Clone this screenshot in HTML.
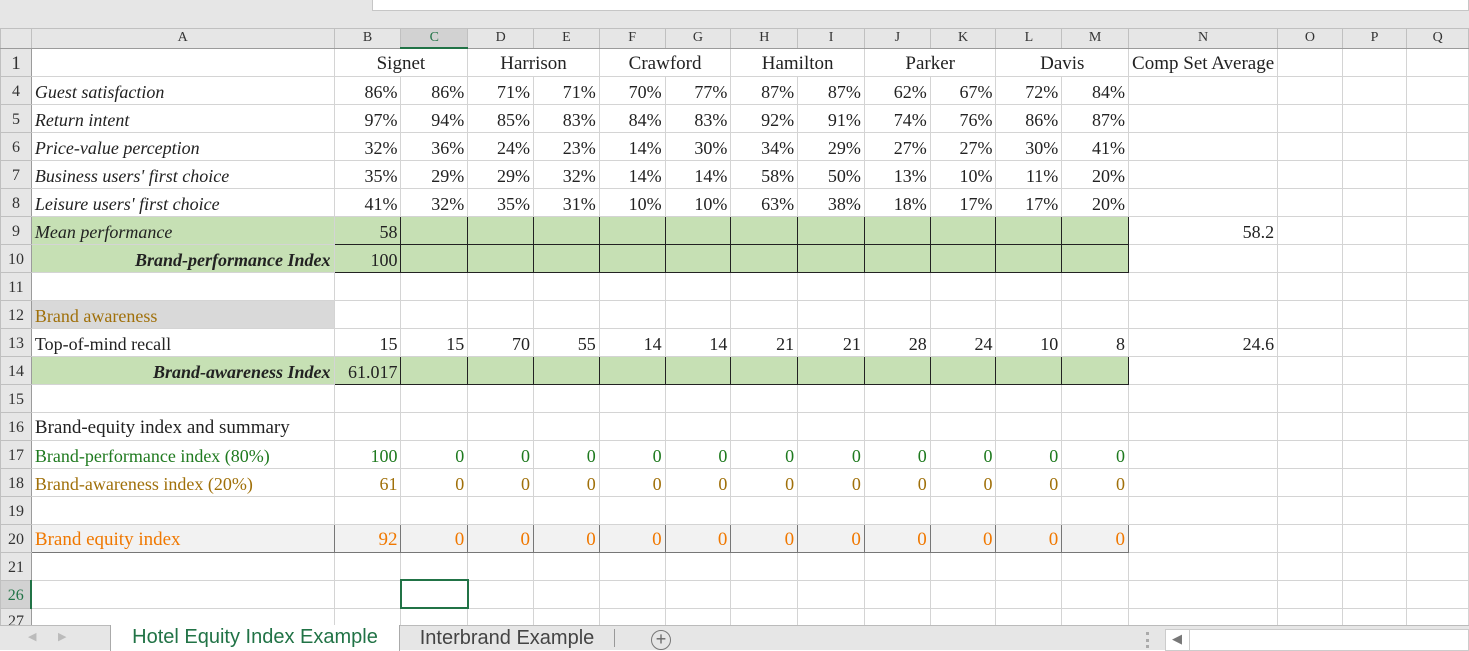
<!DOCTYPE html>
<html><head><meta charset="utf-8"><style>
*{margin:0;padding:0;box-sizing:border-box}
body{width:1469px;height:650px;overflow:hidden;background:#fff;font-family:"Liberation Serif",serif;position:relative}
.top{position:absolute;left:0;top:0;width:1469px;height:28px;background:#e6e6e6}
.top .box{position:absolute;left:372px;top:0;width:1097px;height:11px;background:#fff;border:1px solid #c6c6c6;border-top:none}
table{position:absolute;left:0;top:28px;border-collapse:collapse;table-layout:fixed}
td{border:1px solid #d4d4d4;height:28px;font-size:18px;color:#222;white-space:nowrap;overflow:hidden;padding:4px 3px 0 3px;text-align:right;line-height:22px;vertical-align:top}
tr.h td{height:19px;background:#e6e6e6;border-color:#c0c0c0;font-size:14px;text-align:center;line-height:18px;padding:0;color:#333;border-bottom:1px solid #9b9b9b}
td.rh{background:#e6e6e6;border-color:#c0c0c0;border-right:1px solid #9b9b9b;font-size:16px;text-align:center;padding:4px 0 0 0;color:#333}
td.l{text-align:left}
td.i{font-style:italic}
.g{background:#c6e0b4}
.gb{background:#c6e0b4;border:1px solid #222}
.bi{font-weight:bold;font-style:italic}
.grn{color:#1f7a1f}
.brn{color:#a0700a}
.org td{color:#f07800;background:#f2f2f2;border-top:1px solid #777;border-bottom:1px solid #777;font-size:19px}
.org td.v{border-right:1px solid #777}
.org td.rh{color:#333;background:#e6e6e6;border-top:1px solid #c0c0c0;border-bottom:1px solid #c0c0c0;font-size:16px}
.c{text-align:center}
tr.r1 td{font-size:19px}
.tabs{position:absolute;left:0;top:625px;width:1469px;height:25px;background:#e6e6e6;border-top:1px solid #bbb;font-family:"Liberation Sans",sans-serif}
.sel{position:absolute;left:110px;top:-1px;width:290px;height:26px;background:#fff;border-left:1px solid #aaa;border-right:1px solid #aaa;color:#217346;font-size:20px;text-align:center;line-height:24px}
.t2{position:absolute;left:402px;top:0;width:210px;color:#444;font-size:20px;text-align:center;line-height:24px}
</style></head><body>
<div class="top"><div class="box"></div></div>
<table>
<colgroup><col style="width:31px"><col style="width:303px"><col style="width:67px"><col style="width:67px"><col style="width:66px"><col style="width:66px"><col style="width:66px"><col style="width:66px"><col style="width:67px"><col style="width:67px"><col style="width:66px"><col style="width:66px"><col style="width:66px"><col style="width:67px"><col style="width:146px"><col style="width:65px"><col style="width:65px"><col style="width:62px"></colgroup>
<tr class="h"><td style="background:#e6e6e6"></td><td>A</td><td>B</td><td style="background:#d2d2d2;color:#217346;border-bottom:2px solid #217346">C</td><td>D</td><td>E</td><td>F</td><td>G</td><td>H</td><td>I</td><td>J</td><td>K</td><td>L</td><td>M</td><td>N</td><td>O</td><td>P</td><td>Q</td></tr>
<tr class="r1"><td class="rh">1</td><td></td><td colspan="2" class="c">Signet</td><td colspan="2" class="c">Harrison</td><td colspan="2" class="c">Crawford</td><td colspan="2" class="c">Hamilton</td><td colspan="2" class="c">Parker</td><td colspan="2" class="c">Davis</td><td class="l">Comp Set Average</td><td></td><td></td><td></td></tr>
<tr><td class="rh">4</td><td class="l i">Guest satisfaction</td><td>86%</td><td>86%</td><td>71%</td><td>71%</td><td>70%</td><td>77%</td><td>87%</td><td>87%</td><td>62%</td><td>67%</td><td>72%</td><td>84%</td><td></td><td></td><td></td><td></td></tr>
<tr><td class="rh">5</td><td class="l i">Return intent</td><td>97%</td><td>94%</td><td>85%</td><td>83%</td><td>84%</td><td>83%</td><td>92%</td><td>91%</td><td>74%</td><td>76%</td><td>86%</td><td>87%</td><td></td><td></td><td></td><td></td></tr>
<tr><td class="rh">6</td><td class="l i">Price-value perception</td><td>32%</td><td>36%</td><td>24%</td><td>23%</td><td>14%</td><td>30%</td><td>34%</td><td>29%</td><td>27%</td><td>27%</td><td>30%</td><td>41%</td><td></td><td></td><td></td><td></td></tr>
<tr><td class="rh">7</td><td class="l i">Business users' first choice</td><td>35%</td><td>29%</td><td>29%</td><td>32%</td><td>14%</td><td>14%</td><td>58%</td><td>50%</td><td>13%</td><td>10%</td><td>11%</td><td>20%</td><td></td><td></td><td></td><td></td></tr>
<tr><td class="rh">8</td><td class="l i">Leisure users' first choice</td><td>41%</td><td>32%</td><td>35%</td><td>31%</td><td>10%</td><td>10%</td><td>63%</td><td>38%</td><td>18%</td><td>17%</td><td>17%</td><td>20%</td><td></td><td></td><td></td><td></td></tr>
<tr><td class="rh">9</td><td class="l i g">Mean performance</td><td class="gb">58</td><td class="gb"></td><td class="gb"></td><td class="gb"></td><td class="gb"></td><td class="gb"></td><td class="gb"></td><td class="gb"></td><td class="gb"></td><td class="gb"></td><td class="gb"></td><td class="gb"></td><td>58.2</td><td></td><td></td><td></td></tr>
<tr><td class="rh">10</td><td class="g bi">Brand-performance Index</td><td class="gb">100</td><td class="gb"></td><td class="gb"></td><td class="gb"></td><td class="gb"></td><td class="gb"></td><td class="gb"></td><td class="gb"></td><td class="gb"></td><td class="gb"></td><td class="gb"></td><td class="gb"></td><td></td><td></td><td></td><td></td></tr>
<tr><td class="rh">11</td><td></td><td></td><td></td><td></td><td></td><td></td><td></td><td></td><td></td><td></td><td></td><td></td><td></td><td></td><td></td><td></td><td></td></tr>
<tr><td class="rh">12</td><td class="l brn" style="background:#d9d9d9">Brand awareness</td><td></td><td></td><td></td><td></td><td></td><td></td><td></td><td></td><td></td><td></td><td></td><td></td><td></td><td></td><td></td><td></td></tr>
<tr><td class="rh">13</td><td class="l">Top-of-mind recall</td><td>15</td><td>15</td><td>70</td><td>55</td><td>14</td><td>14</td><td>21</td><td>21</td><td>28</td><td>24</td><td>10</td><td>8</td><td>24.6</td><td></td><td></td><td></td></tr>
<tr><td class="rh">14</td><td class="g bi">Brand-awareness Index</td><td class="gb">61.017</td><td class="gb"></td><td class="gb"></td><td class="gb"></td><td class="gb"></td><td class="gb"></td><td class="gb"></td><td class="gb"></td><td class="gb"></td><td class="gb"></td><td class="gb"></td><td class="gb"></td><td></td><td></td><td></td><td></td></tr>
<tr><td class="rh">15</td><td></td><td></td><td></td><td></td><td></td><td></td><td></td><td></td><td></td><td></td><td></td><td></td><td></td><td></td><td></td><td></td><td></td></tr>
<tr><td class="rh">16</td><td class="l" style="font-size:19px">Brand-equity index and summary</td><td></td><td></td><td></td><td></td><td></td><td></td><td></td><td></td><td></td><td></td><td></td><td></td><td></td><td></td><td></td><td></td></tr>
<tr><td class="rh">17</td><td class="l grn">Brand-performance index (80%)</td><td class="grn">100</td><td class="grn">0</td><td class="grn">0</td><td class="grn">0</td><td class="grn">0</td><td class="grn">0</td><td class="grn">0</td><td class="grn">0</td><td class="grn">0</td><td class="grn">0</td><td class="grn">0</td><td class="grn">0</td><td></td><td></td><td></td><td></td></tr>
<tr><td class="rh">18</td><td class="l brn">Brand-awareness index (20%)</td><td class="brn">61</td><td class="brn">0</td><td class="brn">0</td><td class="brn">0</td><td class="brn">0</td><td class="brn">0</td><td class="brn">0</td><td class="brn">0</td><td class="brn">0</td><td class="brn">0</td><td class="brn">0</td><td class="brn">0</td><td></td><td></td><td></td><td></td></tr>
<tr><td class="rh">19</td><td></td><td></td><td></td><td></td><td></td><td></td><td></td><td></td><td></td><td></td><td></td><td></td><td></td><td></td><td></td><td></td><td></td></tr>
<tr class="org"><td class="rh">20</td><td class="l v">Brand equity index</td><td class="v">92</td><td class="v">0</td><td class="v">0</td><td class="v">0</td><td class="v">0</td><td class="v">0</td><td class="v">0</td><td class="v">0</td><td class="v">0</td><td class="v">0</td><td class="v">0</td><td class="v">0</td><td style="background:#fff;color:#222;border-top-color:#d4d4d4;border-bottom-color:#d4d4d4"></td><td style="background:#fff;border-top-color:#d4d4d4;border-bottom-color:#d4d4d4"></td><td style="background:#fff;border-top-color:#d4d4d4;border-bottom-color:#d4d4d4"></td><td style="background:#fff;border-top-color:#d4d4d4;border-bottom-color:#d4d4d4"></td></tr>
<tr><td class="rh">21</td><td></td><td></td><td></td><td></td><td></td><td></td><td></td><td></td><td></td><td></td><td></td><td></td><td></td><td></td><td></td><td></td><td></td></tr>
<tr><td class="rh" style="color:#217346;background:#d2d2d2;border-right:2px solid #217346">26</td><td></td><td></td><td style="border:2px solid #217346"></td><td></td><td></td><td></td><td></td><td></td><td></td><td></td><td></td><td></td><td></td><td></td><td></td><td></td><td></td></tr>
<tr><td class="rh" style="height:18px;padding-top:2px">27</td><td></td><td></td><td></td><td></td><td></td><td></td><td></td><td></td><td></td><td></td><td></td><td></td><td></td><td></td><td></td><td></td><td></td></tr>
</table>
<div class="tabs">
<span style="position:absolute;left:28px;top:4px;color:#bbb;font-size:11px">◀</span>
<span style="position:absolute;left:58px;top:4px;color:#bbb;font-size:11px">▶</span>
<div class="sel">Hotel Equity Index Example</div>
<div class="t2">Interbrand Example</div>
<div style="position:absolute;left:614px;top:3px;width:1px;height:18px;background:#999"></div>
<div style="position:absolute;left:651px;top:4px;width:20px;height:20px;border:1.5px solid #777;border-radius:50%;text-align:center;line-height:17px;color:#666;font-size:18px">+</div>
<div style="position:absolute;left:1146px;top:6px;width:3px;height:16px;border-left:3px dotted #aaa"></div>
<div style="position:absolute;left:1165px;top:3px;width:304px;height:22px;background:#fff;border:1px solid #ccc"></div>
<div style="position:absolute;left:1189px;top:3px;width:1px;height:22px;background:#ccc"></div>
<span style="position:absolute;left:1172px;top:5px;color:#777;font-size:13px">◀</span>
</div>
</body></html>
